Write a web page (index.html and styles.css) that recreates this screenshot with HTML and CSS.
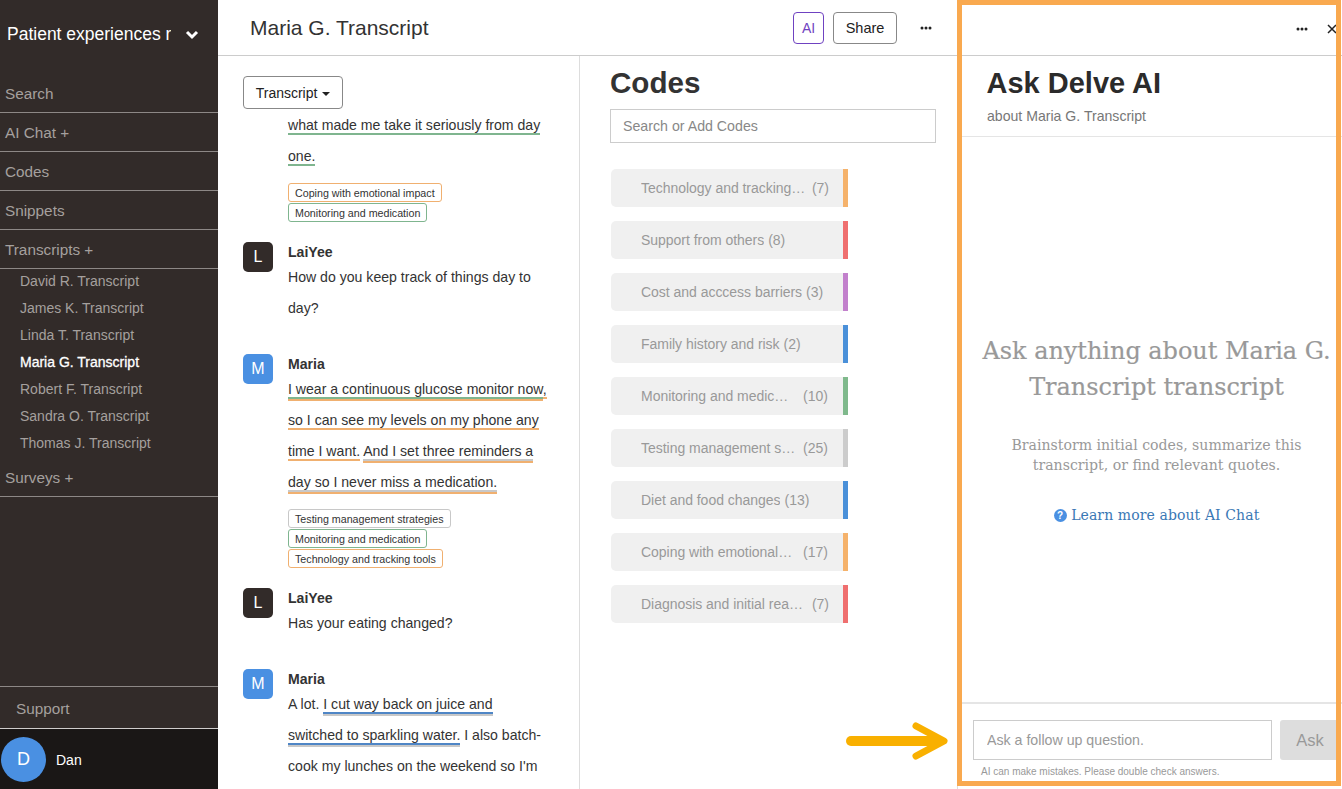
FILE: index.html
```html
<!DOCTYPE html>
<html lang="en">
<head>
<meta charset="utf-8">
<title>Maria G. Transcript</title>
<link rel="stylesheet" href="styles.css">
</head>
<body>
<div class="app">
  <aside class="sidebar">
    <div class="project">
      <span class="project-name">Patient experiences research</span>
      <svg class="chevron" width="14" height="10" viewBox="0 0 14 10"><path d="M2 2l5 5 5-5" fill="none" stroke="#fff" stroke-width="3"/></svg>
    </div>
    <nav class="nav">
      <div class="nav-item">Search</div>
      <div class="nav-item">AI Chat +</div>
      <div class="nav-item">Codes</div>
      <div class="nav-item">Snippets</div>
      <div class="nav-item">Transcripts +</div>
      <ul class="sublist">
        <li>David R. Transcript</li>
        <li>James K. Transcript</li>
        <li>Linda T. Transcript</li>
        <li class="active">Maria G. Transcript</li>
        <li>Robert F. Transcript</li>
        <li>Sandra O. Transcript</li>
        <li>Thomas J. Transcript</li>
      </ul>
      <div class="nav-item">Surveys +</div>
    </nav>
    <div class="support">Support</div>
    <div class="user">
      <span class="user-avatar">D</span>
      <span class="user-name">Dan</span>
    </div>
  </aside>

  <main class="main">
    <header class="main-header">
      <h1 class="doc-title">Maria G. Transcript</h1>
      <button class="btn btn-ai">AI</button>
      <button class="btn btn-share">Share</button>
      <svg class="dots dots-main" width="12" height="4" viewBox="0 0 12 4"><circle cx="2" cy="2" r="1.5"/><circle cx="6" cy="2" r="1.5"/><circle cx="10" cy="2" r="1.5"/></svg>
    </header>
    <div class="columns">
      <section class="transcript">
        <button class="btn btn-transcript">Transcript <span class="caret"></span></button>
        <div class="message message-continued">
          <div class="msg-body">
            <p class="text"><span class="u1 green">what made me take it seriously from day one.</span></p>
            <div class="tags">
              <span class="tag tag-orange">Coping with emotional impact</span>
              <span class="tag tag-green">Monitoring and medication</span>
            </div>
          </div>
        </div>
        <div class="message">
          <span class="avatar avatar-dark">L</span>
          <div class="msg-body">
            <div class="speaker">LaiYee</div>
            <p class="text">How do you keep track of things day to day?</p>
          </div>
        </div>
        <div class="message">
          <span class="avatar avatar-blue">M</span>
          <div class="msg-body">
            <div class="speaker">Maria</div>
            <p class="text"><span class="u2 orange2"><span class="u1 green">I wear a continuous glucose monitor now</span></span><span class="u1 orange">, so I can see my levels on my phone any time I want.</span> <span class="u2 orange2"><span class="u1 grey">And I set three reminders a day so I never miss a medication.</span></span></p>
            <div class="tags">
              <span class="tag tag-grey">Testing management strategies</span>
              <span class="tag tag-green">Monitoring and medication</span>
              <span class="tag tag-orange">Technology and tracking tools</span>
            </div>
          </div>
        </div>
        <div class="message">
          <span class="avatar avatar-dark">L</span>
          <div class="msg-body">
            <div class="speaker">LaiYee</div>
            <p class="text">Has your eating changed?</p>
          </div>
        </div>
        <div class="message">
          <span class="avatar avatar-blue">M</span>
          <div class="msg-body">
            <div class="speaker">Maria</div>
            <p class="text">A lot. <span class="u2 grey2"><span class="u1 blue">I cut way back on juice and switched to sparkling water.</span></span> I also batch-cook my lunches on the weekend so I'm</p>
          </div>
        </div>
      </section>

      <section class="codes">
        <h2 class="codes-title">Codes</h2>
        <input class="codes-search" type="text" placeholder="Search or Add Codes">
        <ul class="code-list">
          <li class="code c-orange"><span class="code-name">Technology and tracking tools</span><span class="code-count">(7)</span></li>
          <li class="code c-red"><span class="code-name">Support from others</span><span class="code-count">(8)</span></li>
          <li class="code c-purple"><span class="code-name">Cost and acccess barriers</span><span class="code-count">(3)</span></li>
          <li class="code c-blue"><span class="code-name">Family history and risk</span><span class="code-count">(2)</span></li>
          <li class="code c-green"><span class="code-name code-name-short">Monitoring and medication</span><span class="code-count">(10)</span></li>
          <li class="code c-grey"><span class="code-name code-name-short">Testing management strategies</span><span class="code-count">(25)</span></li>
          <li class="code c-blue"><span class="code-name">Diet and food changes</span><span class="code-count">(13)</span></li>
          <li class="code c-orange"><span class="code-name code-name-short code-name-shorter">Coping with emotional impact</span><span class="code-count">(17)</span></li>
          <li class="code c-red"><span class="code-name">Diagnosis and initial reactions</span><span class="code-count">(7)</span></li>
        </ul>
      </section>
    </div>
  </main>

  <aside class="ai-panel">
    <div class="ai-bar">
      <svg class="dots" width="12" height="4" viewBox="0 0 12 4"><circle cx="2" cy="2" r="1.5"/><circle cx="6" cy="2" r="1.5"/><circle cx="10" cy="2" r="1.5"/></svg>
      <svg class="close" width="10" height="10" viewBox="0 0 10 10"><path d="M1 1l8 8M9 1l-8 8" stroke="#222" stroke-width="1.5" fill="none"/></svg>
    </div>
    <div class="ai-head">
      <h2 class="ai-title">Ask Delve AI</h2>
      <div class="ai-sub">about Maria G. Transcript</div>
    </div>
    <div class="ai-empty">
      <h3 class="ai-empty-title">Ask anything about Maria G. Transcript transcript</h3>
      <p class="ai-empty-text">Brainstorm initial codes, summarize this transcript, or find relevant quotes.</p>
      <div class="ai-link"><span class="help">?</span> Learn more about AI Chat</div>
    </div>
    <div class="ai-foot">
      <div class="ask-row">
        <input class="ask-input" type="text" placeholder="Ask a follow up question.">
        <button class="ask-btn">Ask</button>
      </div>
      <div class="ask-note">AI can make mistakes. Please double check answers.</div>
    </div>
  </aside>

  <div class="highlight"></div>
  <svg class="arrow" width="104" height="40" viewBox="0 0 104 40"><path d="M5 20H92" stroke="#f9b000" stroke-width="10" stroke-linecap="round" fill="none"/><path d="M70 5L98 20L70 35" stroke="#f9b000" stroke-width="7" stroke-linecap="round" stroke-linejoin="round" fill="none"/></svg>
</div>
</body>
</html>
```
FILE: styles.css
```css
* { box-sizing: border-box; }
html, body { margin: 0; height: 100%; overflow: hidden; background: #fff; }
body { font-family: "Liberation Sans", Arial, sans-serif; font-size: 14.1px; color: #333; }
h1, h2, h3, p, ul { margin: 0; padding: 0; }
ul { list-style: none; }
button, input { font-family: inherit; }

.app { position: relative; display: flex; width: 1342px; height: 789px; overflow: hidden; }

.sidebar { flex: 0 0 218px; display: flex; flex-direction: column; background: #322b29; color: #a5a09e; }
.project { height: 74px; padding: 0 19px 5px 7px; display: flex; align-items: center; justify-content: space-between; color: #fff; }
.project-name { width: 164px; overflow: hidden; white-space: nowrap; font-size: 17.5px; }
.nav { flex: 1; }
.nav-item { height: 39px; padding: 2px 5px 0; display: flex; align-items: center; font-size: 15.3px; border-bottom: 1px solid #8d8886; }
.sublist li { height: 27px; padding-left: 20px; line-height: 25px; font-size: 14px; color: #a5a09e; }
.sublist li.active { color: #fff; -webkit-text-stroke: 0.3px #fff; }
.support { height: 42px; padding-left: 16px; line-height: 43px; font-size: 15.3px; border-top: 1px solid #8d8886; }
.user { height: 61px; padding: 1px 0 0 1px; display: flex; align-items: center; gap: 10px; background: #1a1716; border-top: 1px solid #cfcdcc; color: #fff; }
.user-avatar { width: 45px; height: 45px; border-radius: 50%; background: #4a90e2; display: flex; align-items: center; justify-content: center; font-size: 18px; }
.user-name { font-size: 14px; }

.main { flex: 0 0 739px; display: flex; flex-direction: column; min-width: 0; }
.main-header { height: 56px; flex: none; padding: 0 25px 0 32px; display: flex; align-items: center; border-bottom: 1px solid #ccc; }
.doc-title { margin: 1px auto 0 0; font-size: 21px; font-weight: normal; color: #333; }
.btn { background: #fff; border: 1px solid #888; border-radius: 4px; color: #222; font-size: 14px; padding: 0; }
.btn-ai { width: 31px; height: 32px; border-color: #6f42c1; color: #6f42c1; }
.btn-share { width: 64px; height: 32px; margin: 0 23px 0 9px; font-size: 14.5px; }
.dots { fill: #222; }

.columns { flex: 1; display: flex; min-height: 0; }
.transcript { flex: 0 0 362px; padding: 20px 29px 0 25px; border-right: 1px solid #ddd; overflow: hidden; }
.btn-transcript { display: block; width: 100px; height: 33px; margin-bottom: 1px; }
.caret { display: inline-block; vertical-align: 2px; margin-left: 1px; border: 4px solid transparent; border-top-color: #222; border-bottom: 0; }
.message { display: flex; gap: 15px; margin-bottom: 20px; }
.message-continued { margin-left: 45px; }
.avatar { flex: none; width: 30px; height: 30px; border-radius: 5px; display: flex; align-items: center; justify-content: center; color: #fff; font-size: 16px; }
.avatar-dark { background: #322b29; }
.avatar-blue { background: #4a90e2; }
.msg-body { flex: 1; min-width: 0; }
.speaker { height: 20px; line-height: 20px; font-weight: bold; color: #333; }
.text { line-height: 31px; color: #333; }
.text:last-child { padding-bottom: 10px; }
.u1 { border-bottom: 2px solid; }
.u2 { border-bottom: 2px solid; padding-bottom: 2px; }
.green { border-bottom-color: #7fb58f; }
.orange { border-bottom-color: #f0b070; }
.orange2 { border-bottom-color: #f0b070; }
.grey { border-bottom-color: #c8c8c8; }
.grey2 { border-bottom-color: #c8c8c8; }
.blue { border-bottom-color: #4f86c6; }
.tags { margin-top: 11px; display: flex; flex-direction: column; align-items: flex-start; gap: 1px; }
.tag { height: 19px; padding: 0 6px; display: flex; align-items: center; border: 1px solid; border-radius: 3px; font-size: 10.7px; color: #333; }
.tag-orange { border-color: #f0b070; }
.tag-green { border-color: #7fb58f; }
.tag-grey { border-color: #c8c8c8; }

.codes { flex: 1; padding: 0 20px 0 30px; }
.codes-title { height: 53px; line-height: 53px; font-size: 29.6px; font-weight: bold; color: #333; }
.codes-search { display: block; width: 326px; height: 34px; padding: 0 12px; border: 1px solid #ccc; background: #fff; font-size: 14.2px; }
.codes-search::placeholder { color: #888; opacity: 1; }
.code-list { margin-top: 26px; display: flex; flex-direction: column; gap: 14px; }
.code { width: 237px; height: 38px; margin-left: 1px; padding: 0 14px 0 30px; display: flex; align-items: center; gap: 4px; background: #f0f0f0; border-right: 5px solid; border-radius: 5px 0 0 5px; color: #999; font-size: 14px; }
.code-name { overflow: hidden; white-space: nowrap; text-overflow: ellipsis; letter-spacing: -0.03px; }
.code-name-short { max-width: 155px; }
.code-name-shorter { max-width: 152px; }
.code-name-short + .code-count { margin-left: auto; margin-right: 1px; }
.code-count { flex: none; }
.c-orange { border-right-color: #f5b26b; }
.c-red { border-right-color: #ef6f6f; }
.c-purple { border-right-color: #c280cc; }
.c-blue { border-right-color: #4a90d9; }
.c-green { border-right-color: #7fb98c; }
.c-grey { border-right-color: #ccc; }

.ai-panel { flex: 0 0 385px; display: flex; flex-direction: column; border-left: 1px solid #ddd; }
.ai-bar { height: 56px; flex: none; padding: 2px 5px 0 0; display: flex; align-items: center; justify-content: flex-end; gap: 19px; border-bottom: 1px solid #ccc; }
.ai-head { height: 81px; flex: none; padding: 0 0 0 29px; border-bottom: 1px solid #e5e5e5; }
.ai-title { height: 52px; margin-left: -0.5px; line-height: 54px; font-size: 29px; font-weight: bold; color: #2b2b2b; }
.ai-sub { line-height: 16px; font-size: 14.1px; color: #777; }
.ai-empty { flex: 1; padding: 0 5px 0 18px; display: flex; flex-direction: column; align-items: center; text-align: center; font-family: "DejaVu Serif", serif; }
.ai-empty-title { margin-top: 196px; font-size: 24px; line-height: 36px; font-weight: normal; color: #999; -webkit-text-stroke: 0.2px #999; letter-spacing: -0.04px; }
.ai-empty-text { margin-top: 30px; width: 320px; font-size: 14.1px; line-height: 20px; color: #999; }
.ai-link { margin-top: 30px; font-size: 14px; line-height: 20px; color: #3a78b5; letter-spacing: 0.1px; }
.help { display: inline-block; width: 13px; height: 13px; border-radius: 50%; background: #4a90e2; color: #fff; font-family: "Liberation Sans", sans-serif; font-size: 10px; font-weight: bold; line-height: 13px; text-align: center; vertical-align: 1px; }
.ai-foot { height: 87px; flex: none; padding: 16px 0 0 15px; border-top: 2px solid #e5e5e5; }
.ask-row { display: flex; gap: 8px; }
.ask-input { width: 299px; height: 40px; padding: 0 13px; border: 1px solid #ccc; background: #fff; font-size: 14.2px; }
.ask-input::placeholder { color: #999; opacity: 1; }
.ask-btn { width: 60px; height: 40px; border: 0; border-radius: 3px 0 0 3px; background: #ddd; color: #999; font-size: 16.5px; padding: 0; }
.ask-note { margin: 6px 0 0 8px; font-size: 10px; line-height: 12px; color: #999; }

.highlight { position: absolute; left: 957px; top: 0; width: 384px; height: 786px; border: 5px solid #f9a94f; pointer-events: none; }
.arrow { position: absolute; left: 846px; top: 721px; }
```
